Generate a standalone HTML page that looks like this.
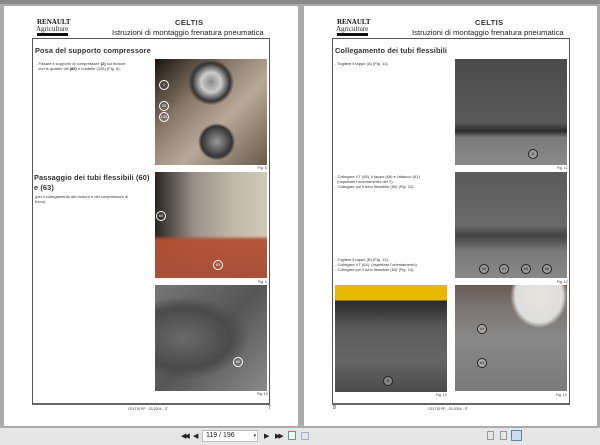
<!DOCTYPE html>
<html><head><meta charset="utf-8"><style>
*{margin:0;padding:0;box-sizing:border-box}
body{width:600px;height:445px;overflow:hidden;background:#ababab;font-family:"Liberation Sans",sans-serif;position:relative}
.a{position:absolute}
.page{background:#fff;top:6px;height:420px}
.box{border:1px solid #555;border-bottom:2px solid #666}
.logo1{font-family:"Liberation Serif",serif;font-weight:bold;font-size:7px;color:#111}
.logo2{font-family:"Liberation Serif",serif;font-size:7px;color:#222}
.bar{background:#111;height:3px;width:31px}
.t1{font-size:7.5px;font-weight:bold;color:#333;letter-spacing:.4px}
.t2{font-size:7.7px;color:#222}
.h{font-size:7.4px;font-weight:bold;color:#333;letter-spacing:.1px}
.s{font-size:4px;color:#333;line-height:5px}
.fig{font-size:3.5px;color:#333}
.c{border:1px solid #fff;border-radius:50%;width:10px;height:10px;font-size:4px;color:#fff;text-align:center;line-height:8px}
.cb{border:1px solid #222;border-radius:50%;width:10px;height:10px;font-size:4px;color:#222;text-align:center;line-height:8px;background:#ccc}
</style></head><body>
<div class="a" style="left:0;top:0;width:600px;height:4px;background:#8a8a8a"></div>
<div class="a page" style="left:4px;width:294px"></div>
<div class="a logo1" style="left:37px;top:18px">RENAULT</div>
<div class="a logo2" style="left:36px;top:25px">Agriculture</div>
<div class="a bar" style="left:37px;top:33px"></div>
<div class="a t1" style="left:175px;top:18px">CELTIS</div>
<div class="a t2" style="left:112px;top:28px">Istruzioni di montaggio frenatura pneumatica</div>
<div class="a box" style="left:32px;top:38px;width:238px;height:367px"></div>
<div class="a h" style="left:35px;top:46px">Posa del supporto compressore</div>
<div class="a s" style="left:36px;top:61px">- Fissare il supporto di compressore <b>(2)</b> sul motore<br>&nbsp; con le quattro viti <b>(85)</b> e rondelle (135) (Fig. 8).</div>
<div class="a h" style="left:34px;top:173px;line-height:10px">Passaggio dei tubi flessibili (60)<br>e (63)</div>
<div class="a s" style="left:35px;top:194px">(per il collegamento del motore e del compressore di<br>freno)</div>
<div class="a" style="left:155px;top:59px;width:112px;height:106px;background:radial-gradient(circle at 50% 22%,#888 0,#ccc 10%,#333 19%,transparent 23%),radial-gradient(circle at 55% 78%,#999 0,#333 15%,transparent 18%),linear-gradient(135deg,#1a1510 0,#8a7a6a 35%,#b8a898 60%,#6a5a4a 100%)"></div>
<div class="a c" style="left:159px;top:80px">2</div>
<div class="a c" style="left:159px;top:101px">85</div>
<div class="a c" style="left:159px;top:112px">135</div>
<div class="a fig" style="left:258px;top:166px">Fig. 8</div>
<div class="a" style="left:155px;top:172px;width:112px;height:106px;background:linear-gradient(180deg,transparent 0,transparent 60%,rgba(180,80,50,.95) 64%,#a8503a 100%),linear-gradient(90deg,#2a2520 0,#9a9088 35%,#c0b8a8 70%,#d0c8b8 100%)"></div>
<div class="a c" style="left:156px;top:211px">60</div>
<div class="a c" style="left:213px;top:260px">63</div>
<div class="a fig" style="left:258px;top:280px">Fig. 9</div>
<div class="a" style="left:155px;top:285px;width:112px;height:106px;background:radial-gradient(ellipse at 25% 50%,#6a6a6a 0,#4a4a4a 40%,transparent 55%),linear-gradient(135deg,#777 0,#555 50%,#8a8a8a 100%)"></div>
<div class="a c" style="left:233px;top:357px">60</div>
<div class="a fig" style="left:257px;top:392px">Fig. 10</div>
<div class="a" style="left:128px;top:407px;font-size:3.5px;color:#333">CELTIS PP - 03-2004 - IT</div>
<div class="a" style="left:268px;top:405px;font-size:5px;color:#333">7</div>
<div class="a page" style="left:304px;width:293px"></div>
<div class="a logo1" style="left:337px;top:18px">RENAULT</div>
<div class="a logo2" style="left:336px;top:25px">Agriculture</div>
<div class="a bar" style="left:337px;top:33px"></div>
<div class="a t1" style="left:475px;top:18px">CELTIS</div>
<div class="a t2" style="left:412px;top:28px">Istruzioni di montaggio frenatura pneumatica</div>
<div class="a box" style="left:332px;top:38px;width:238px;height:367px"></div>
<div class="a h" style="left:335px;top:46px">Collegamento dei tubi flessibili</div>
<div class="a s" style="left:335px;top:61px">- Togliere il tappo (A) (Fig. 11).</div>
<div class="a s" style="left:335px;top:174px">- Collegare il T (65), il tappo (66) e l'attacco (61)<br>&nbsp; (rispettare l'orientamento del T).<br>- Collegare poi il tubo flessibile (60) (Fig. 12).</div>
<div class="a s" style="left:335px;top:257px">- Togliere il tappo (B) (Fig. 13).<br>- Collegare il T (64). (rispettare l'orientamento).<br>- Collegare poi il tubo flessibile (63) (Fig. 14).</div>
<div class="a" style="left:455px;top:59px;width:112px;height:106px;background:linear-gradient(180deg,#4a4a4a 0,#5a5a5a 60%,#2a2a2a 68%,#7a7a7a 74%,#8a8a8a 100%)"></div>
<div class="a cb" style="left:528px;top:149px;background:#999">A</div>
<div class="a fig" style="left:557px;top:166px">Fig. 11</div>
<div class="a" style="left:455px;top:172px;width:112px;height:106px;background:linear-gradient(180deg,#5a5a5a 0,#6a6a6a 50%,#444 60%,#7a7a7a 75%,#888 100%)"></div>
<div class="a cb" style="left:479px;top:264px;background:#999">60</div>
<div class="a cb" style="left:499px;top:264px;background:#999">61</div>
<div class="a cb" style="left:521px;top:264px;background:#999">65</div>
<div class="a cb" style="left:542px;top:264px;background:#999">66</div>
<div class="a fig" style="left:557px;top:280px">Fig. 12</div>
<div class="a" style="left:335px;top:285px;width:112px;height:107px;background:linear-gradient(180deg,#e8b800 0,#e8b800 14%,#2a2a2a 15%,#5a5a5a 40%,#666 70%,#4a4a4a 100%)"></div>
<div class="a cb" style="left:383px;top:376px;background:#888">B</div>
<div class="a fig" style="left:436px;top:393px">Fig. 13</div>
<div class="a" style="left:455px;top:285px;width:112px;height:106px;background:radial-gradient(ellipse at 75% 10%,#e8e4de 0,#ddd 20%,transparent 24%),linear-gradient(180deg,#6a5a54 0,#7a7470 20%,#888 50%,#7a7a7a 100%)"></div>
<div class="a cb" style="left:477px;top:324px;background:#aaa">64</div>
<div class="a cb" style="left:477px;top:358px;background:#aaa">63</div>
<div class="a fig" style="left:556px;top:393px">Fig. 14</div>
<div class="a" style="left:428px;top:407px;font-size:3.5px;color:#333">CELTIS PP - 03-2004 - IT</div>
<div class="a" style="left:333px;top:405px;font-size:5px;color:#333">8</div>
<div class="a" style="left:0;top:428px;width:600px;height:17px;background:#e6e6e6"></div>
<div class="a" style="left:181px;top:432px;font-size:7px;color:#222;letter-spacing:-2px">&#9664;&#9664;</div>
<div class="a" style="left:193px;top:432px;font-size:7px;color:#222">&#9664;</div>
<div class="a" style="left:202px;top:430px;width:56px;height:12px;background:#fff;border:1px solid #bbb;font-size:7px;line-height:10px;padding-left:3px;color:#222">119 / 196<span style="float:right;margin-right:1px;font-size:5px">&#9662;</span></div>
<div class="a" style="left:264px;top:432px;font-size:7px;color:#222">&#9654;</div>
<div class="a" style="left:275px;top:432px;font-size:7px;color:#222;letter-spacing:-2px">&#9654;&#9654;</div>
<div class="a" style="left:288px;top:431px;width:8px;height:9px;border:1px solid #4a8;background:#fff"></div>
<div class="a" style="left:301px;top:432px;width:8px;height:8px;border:1px solid #aac"></div>
<div class="a" style="left:487px;top:431px;width:7px;height:9px;border:1px solid #999"></div>
<div class="a" style="left:500px;top:431px;width:7px;height:9px;border:1px solid #999"></div>
<div class="a" style="left:511px;top:430px;width:11px;height:11px;border:1px solid #58a;background:#cde"></div>
</body></html>
